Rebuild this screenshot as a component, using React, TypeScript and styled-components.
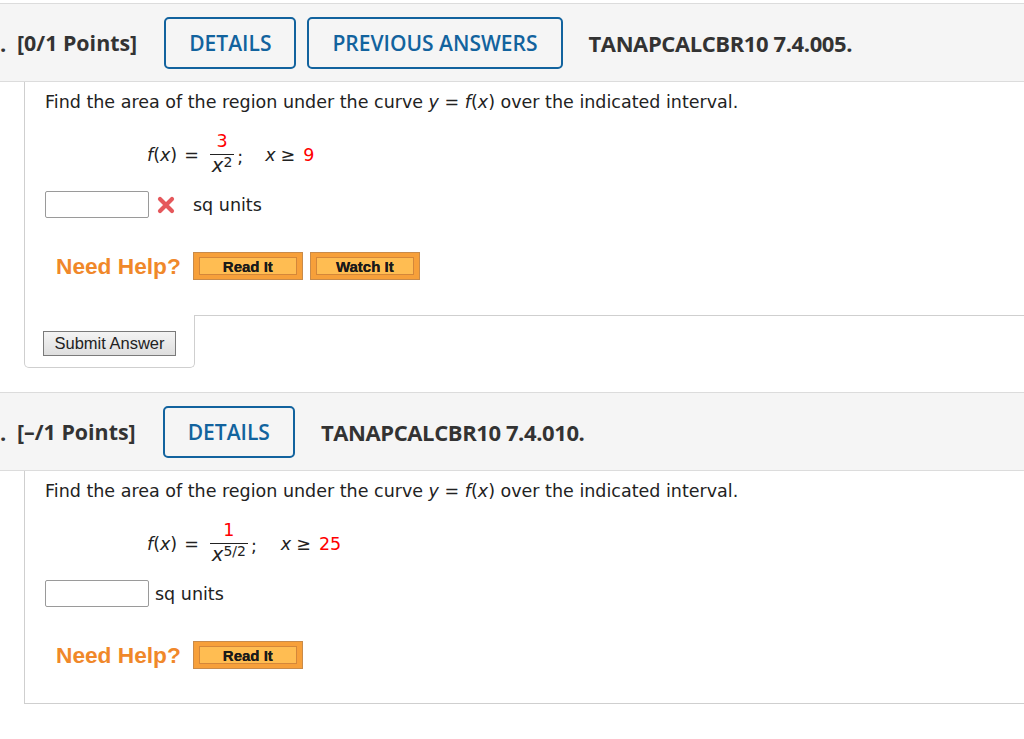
import React from 'react'
import styled, { createGlobalStyle } from 'styled-components'

const GlobalStyle = createGlobalStyle`
  html, body {
    margin: 0;
    padding: 0;
    background: #fff;
  }
  body {
    font-family: "DejaVu Sans", Verdana, sans-serif;
    color: #222;
  }
`

const Page = styled.div`
  padding-top: 3px;
  width: 1024px;
  overflow: hidden;
`

const Question = styled.section<{ gap?: number }>`
  margin-bottom: ${(p) => p.gap || 0}px;
`

const Header = styled.div`
  display: flex;
  align-items: center;
  height: 77px;
  background: #f5f5f5;
  border-top: 1px solid #dcdcdc;
  border-bottom: 1px solid #dcdcdc;
  font-family: "Open Sans", sans-serif;
  font-weight: 700;
  font-size: 22px;
  color: #333;
`

const Num = styled.span`
  width: 17px;
`

const Points = styled.span`
  font-size: 21.4px;
  margin-right: 27px;
`

const OutlineButton = styled.button`
  height: 52px;
  padding: 0 23px;
  margin-right: 11px;
  border: 2px solid #12639e;
  border-radius: 5px;
  background: transparent;
  color: #12639e;
  font-family: "Open Sans", sans-serif;
  font-weight: 600;
  font-size: 21px;
  &:last-of-type {
    margin-right: 26px;
  }
`

const Code = styled.span`
  letter-spacing: -0.4px;
`

const Body = styled.div<{ closed?: boolean }>`
  margin-left: 24px;
  height: 233px;
  box-sizing: border-box;
  padding: 10px 0 0 20px;
  border-left: 1px solid #cfcfcf;
  border-bottom: ${(p) => (p.closed ? '1px solid #cfcfcf' : 'none')};
  font-size: 17.5px;
`

const Prompt = styled.div`
  line-height: 20px;
  height: 20px;
  white-space: nowrap;
`

const Equation = styled.div`
  display: flex;
  align-items: center;
  height: 50px;
  margin: 18px 0 0 102px;
  line-height: 20px;
`

const Italic = styled.span`
  font-style: italic;
`

const Equals = styled.span`
  margin: 0 3px 0 7px;
`

const Fraction = styled.span`
  display: inline-flex;
  flex-direction: column;
  align-items: stretch;
  margin-left: 8px;
`

const Numer = styled.span`
  color: #f00;
  text-align: center;
  height: 20px;
  padding-bottom: 3px;
  border-bottom: 1px solid #222;
`

const Denom = styled.span`
  display: flex;
  justify-content: center;
  align-items: flex-start;
  height: 24px;
  padding: 0 2px;
`

const DenomVar = styled.span`
  font-style: italic;
  font-size: 19.5px;
  line-height: 22px;
`

const Sup = styled.span`
  font-size: 14px;
  line-height: 15px;
`

const Semi = styled.span<{ gap: number }>`
  margin: 4px ${(p) => p.gap}px 0 3px;
`

const Rel = styled.span`
  margin: 0 8px 0 5px;
`

const Red = styled.span`
  color: #f00;
`

const AnswerRow = styled.div`
  display: flex;
  align-items: center;
  margin-top: 11px;
  height: 27px;
`

const AnswerInput = styled.input`
  width: 104px;
  height: 27px;
  box-sizing: border-box;
  border: 1px solid #9a9a9a;
  border-radius: 2px;
  margin: 0 6px 0 0;
  padding: 0;
`

const Units = styled.span<{ shift?: number }>`
  margin-left: ${(p) => p.shift || 0}px;
`

const HelpRow = styled.div`
  display: flex;
  align-items: center;
  margin-top: 34px;
  padding-left: 11px;
`

const NeedHelp = styled.span`
  font-family: "Liberation Sans", Arial, sans-serif;
  font-weight: 700;
  font-size: 22.7px;
  color: #f0882a;
  margin-right: 12px;
`

const HelpButton = styled.span`
  display: inline-flex;
  width: 110px;
  height: 28px;
  box-sizing: border-box;
  padding: 4px 5px;
  margin-right: 7px;
  border: 1px solid #c98b4a;
  background: #f7a03a;
`

const HelpInner = styled.span`
  flex: 1;
  display: flex;
  align-items: center;
  justify-content: center;
  border: 1px solid #d4873a;
  background: #ffbd52;
  font-family: "Liberation Sans", Arial, sans-serif;
  font-weight: 700;
  font-size: 15px;
  color: #1a1a1a;
  text-shadow: 0 0 0.6px #1a1a1a;
`

const SubmitRow = styled.div`
  display: flex;
  margin-left: 24px;
`

const SubmitTab = styled.div`
  width: 171px;
  height: 53px;
  box-sizing: border-box;
  padding: 16px 0 0 18px;
  border: 1px solid #cfcfcf;
  border-top: none;
  border-radius: 0 0 5px 5px;
`

const Filler = styled.div`
  flex: 1;
  border-top: 1px solid #cfcfcf;
`

const SubmitButton = styled.button`
  height: 25px;
  width: 133px;
  padding: 0;
  border: 1px solid #7a7a7a;
  background: linear-gradient(#f4f4f4, #dedede);
  font-family: "Liberation Sans", Arial, sans-serif;
  font-size: 16.5px;
  color: #222;
`

const WrongMark = () => (
  <svg width="20" height="20" viewBox="0 0 20 20" style={{ marginLeft: 1 }}>
    <path d="M4 4 L16 16 M16 4 L4 16" stroke="#e5575b" strokeWidth="4.2" strokeLinecap="round" />
  </svg>
)

type EqProps = { num: string; power: string; bound: string; gap: number }

const FormulaLine = ({ num, power, bound, gap }: EqProps) => (
  <Equation>
    <span>
      <Italic>f</Italic>(<Italic>x</Italic>)
    </span>
    <Equals>=</Equals>
    <Fraction>
      <Numer>{num}</Numer>
      <Denom>
        <DenomVar>x</DenomVar>
        <Sup>{power}</Sup>
      </Denom>
    </Fraction>
    <Semi gap={gap}>;</Semi>
    <Italic>x</Italic>
    <Rel>≥</Rel>
    <Red>{bound}</Red>
  </Equation>
)

export default function App() {
  return (
    <>
      <GlobalStyle />
      <Page>
        <Question gap={24}>
          <Header>
            <Num>.</Num>
            <Points>[0/1 Points]</Points>
            <OutlineButton>DETAILS</OutlineButton>
            <OutlineButton>PREVIOUS ANSWERS</OutlineButton>
            <Code>TANAPCALCBR10 7.4.005.</Code>
          </Header>
          <Body>
            <Prompt>
              Find the area of the region under the curve <Italic>y</Italic> = <Italic>f</Italic>(<Italic>x</Italic>) over the indicated interval.
            </Prompt>
            <FormulaLine num="3" power="2" bound="9" gap={22} />
            <AnswerRow>
              <AnswerInput type="text" />
              <WrongMark />
              <Units shift={17}>sq units</Units>
            </AnswerRow>
            <HelpRow>
              <NeedHelp>Need Help?</NeedHelp>
              <HelpButton>
                <HelpInner>Read It</HelpInner>
              </HelpButton>
              <HelpButton>
                <HelpInner>Watch It</HelpInner>
              </HelpButton>
            </HelpRow>
          </Body>
          <SubmitRow>
            <SubmitTab>
              <SubmitButton>Submit Answer</SubmitButton>
            </SubmitTab>
            <Filler />
          </SubmitRow>
        </Question>

        <Question>
          <Header>
            <Num>.</Num>
            <Points>[–/1 Points]</Points>
            <OutlineButton>DETAILS</OutlineButton>
            <Code>TANAPCALCBR10 7.4.010.</Code>
          </Header>
          <Body closed>
            <Prompt>
              Find the area of the region under the curve <Italic>y</Italic> = <Italic>f</Italic>(<Italic>x</Italic>) over the indicated interval.
            </Prompt>
            <FormulaLine num="1" power="5/2" bound="25" gap={24} />
            <AnswerRow>
              <AnswerInput type="text" />
              <Units>sq units</Units>
            </AnswerRow>
            <HelpRow>
              <NeedHelp>Need Help?</NeedHelp>
              <HelpButton>
                <HelpInner>Read It</HelpInner>
              </HelpButton>
            </HelpRow>
          </Body>
        </Question>
      </Page>
    </>
  )
}
